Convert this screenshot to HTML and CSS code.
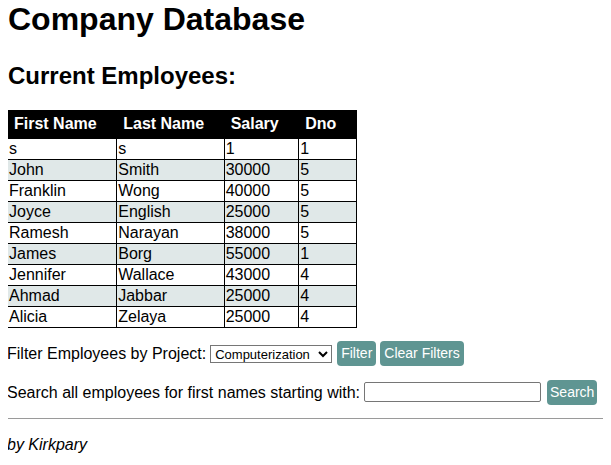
FILE: index.html
```html
<!DOCTYPE html>
<html>
<head>
<meta charset="utf-8">
<title>Company Database</title>
<link rel="stylesheet" href="styles.css">
</head>
<body>
<h1 class="title">Company Database</h1>
<h2 class="subtitle">Current Employees:</h2>
<table class="emp">
  <thead>
    <tr><th>First Name</th><th>Last Name</th><th>Salary</th><th>Dno</th></tr>
  </thead>
  <tbody>
    <tr><td>s</td><td>s</td><td>1</td><td>1</td></tr>
    <tr><td>John</td><td>Smith</td><td>30000</td><td>5</td></tr>
    <tr><td>Franklin</td><td>Wong</td><td>40000</td><td>5</td></tr>
    <tr><td>Joyce</td><td>English</td><td>25000</td><td>5</td></tr>
    <tr><td>Ramesh</td><td>Narayan</td><td>38000</td><td>5</td></tr>
    <tr><td>James</td><td>Borg</td><td>55000</td><td>1</td></tr>
    <tr><td>Jennifer</td><td>Wallace</td><td>43000</td><td>4</td></tr>
    <tr><td>Ahmad</td><td>Jabbar</td><td>25000</td><td>4</td></tr>
    <tr><td>Alicia</td><td>Zelaya</td><td>25000</td><td>4</td></tr>
  </tbody>
</table>
<form class="row filter-row">
  <label class="lbl">Filter Employees by Project:</label><select class="sel"><option>Computerization</option></select><button type="button" class="btn">Filter</button><button type="button" class="btn">Clear Filters</button>
</form>
<form class="row search-row">
  <label class="lbl">Search all employees for first names starting with:</label><input class="txt" type="text"><button type="button" class="btn btn-search">Search</button>
</form>
<hr class="rule">
<p class="by">by Kirkpary</p>
</body>
</html>
```

FILE: styles.css
```css
html, body {
  background: #ffffff;
}
body {
  margin: 0 8px;
  padding-top: 1px;
  font-family: "Liberation Sans", Arial, sans-serif;
  font-size: 16px;
  color: #000;
}
.title {
  font-size: 32px;
  font-weight: bold;
  margin: 0 0 24px 0;
}
.subtitle {
  font-size: 24px;
  font-weight: bold;
  margin: 0 0 20px 0;
}
.emp {
  border-collapse: collapse;
  margin-left: -1px;
}
.emp th {
  background: #000;
  color: #fff;
  text-align: left;
  font-weight: bold;
  padding: 5px 19.5px 6px 6px;
  border: 1px solid #000;
  line-height: 16px;
}
.emp td {
  border: 1px solid #000;
  padding: 1px 1px;
  line-height: 18px;
}
.emp tbody tr:nth-child(even) {
  background: #e0e8e8;
}
.row {
  margin: 12px 0 0 -1px;
  white-space: nowrap;
  line-height: 25px;
}
.search-row {
  margin-top: 12px;
}
.lbl {
  margin-right: 4px;
  vertical-align: middle;
}
.sel {
  font-family: "Liberation Sans", Arial, sans-serif;
  font-size: 13px;
  width: 122px;
  height: 18px;
  padding: 0;
  border: 1px solid #767676;
  border-radius: 0;
  background: #fff;
  margin-right: 5px;
  vertical-align: middle;
}
.txt {
  width: 171px;
  height: 16px;
  padding: 1px 2px;
  border: 1px solid #767676;
  border-radius: 2px;
  margin-right: 6px;
  vertical-align: middle;
}
.btn {
  background: #5f9592;
  color: #fff;
  border: none;
  border-radius: 4px;
  font-family: "Liberation Sans", Arial, sans-serif;
  font-size: 14px;
  line-height: 17px;
  padding: 4px 4px;
  margin-right: 4px;
  vertical-align: middle;
}
.btn-search {
  padding: 4px 3px;
}
.rule {
  margin: 13px -8px 0 -1px;
  border: none;
  border-top: 1px solid #9a9a9a;
}
.by {
  font-style: italic;
  margin: 17px 0 0 -1px;
}
```
